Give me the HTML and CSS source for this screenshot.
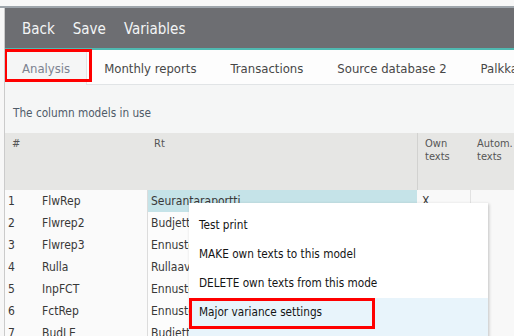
FILE: index.html
```html
<!DOCTYPE html>
<html>
<head>
<meta charset="utf-8">
<link rel="stylesheet" href="styles.css">
</head>
<body>
<div class="topline"></div>
<div class="page">
  <nav class="nav">
    <span class="nav-item">Back</span>
    <span class="nav-item">Save</span>
    <span class="nav-item">Variables</span>
  </nav>
  <div class="tabs">
    <span class="tab active">Analysis</span>
    <span class="tab">Monthly reports</span>
    <span class="tab">Transactions</span>
    <span class="tab">Source database 2</span>
    <span class="tab">Palkkalaskenta</span>
  </div>
  <div class="intro">The column models in use</div>
  <div class="grid">
    <div class="th th-num">#</div>
    <div class="th th-rt">Rt</div>
    <div class="th th-own">Own<br>texts</div>
    <div class="th th-auto">Autom.<br>texts</div>

    <div class="td">1</div><div class="td">FlwRep</div><div class="td rt sel">Seurantaraportti</div><div class="td own">X</div><div class="td auto"></div>
    <div class="td">2</div><div class="td">Flwrep2</div><div class="td rt">Budjettiraportti</div><div class="td own"></div><div class="td auto"></div>
    <div class="td">3</div><div class="td">Flwrep3</div><div class="td rt">Ennusteraportti</div><div class="td own"></div><div class="td auto"></div>
    <div class="td">4</div><div class="td">Rulla</div><div class="td rt">Rullaava ennuste</div><div class="td own"></div><div class="td auto"></div>
    <div class="td">5</div><div class="td">InpFCT</div><div class="td rt">Ennusteen syöttö</div><div class="td own"></div><div class="td auto"></div>
    <div class="td">6</div><div class="td">FctRep</div><div class="td rt">Ennusteraportti</div><div class="td own"></div><div class="td auto"></div>
    <div class="td">7</div><div class="td">BudLE</div><div class="td rt">Budjetti LE</div><div class="td own"></div><div class="td auto"></div>
  </div>

  <div class="menu">
    <div class="menu-item">Test print</div>
    <div class="menu-item">MAKE own texts to this model</div>
    <div class="menu-item">DELETE own texts from this mode</div>
    <div class="menu-item hover">Major variance settings</div>
  </div>

  <div class="mark mark-tab"></div>
  <div class="mark mark-item"></div>
</div>
</body>
</html>
```

FILE: styles.css
```css
html, body {
  margin: 0;
  padding: 0;
  height: 336px;
  overflow: hidden;
  background: #f7f7f7;
}

body {
  font-family: "DejaVu Sans Condensed", "DejaVu Sans", sans-serif;
  font-stretch: condensed;
  color: #333;
}

.topline {
  margin-top: 6px;
  height: 2px;
  background: #9ea5ab;
}

.page {
  position: relative;
  margin-left: 4px;
  border-left: 1px solid #cbcbcb;
  background: #f5f6f6;
  height: 328px;
  overflow: hidden;
}

.nav {
  display: flex;
  gap: 18px;
  height: 40px;
  box-sizing: border-box;
  padding: 2px 0 0 17px;
  align-items: center;
  background: #6d6e72;
  border-bottom: 2px solid #4fb9b1;
  height: 42px;
}

.nav-item {
  font-size: 15px;
  color: #f3f5f6;
}

.tabs {
  display: flex;
  height: 34px;
  background: #fdfdfd;
  border-bottom: 1px solid #e1e4e6;
  white-space: nowrap;
}

.tab {
  padding: 3px 17px 0;
  line-height: 31px;
  font-size: 13px;
  color: #474747;
}

.tab.active {
  background: #f5f6f6;
  color: #7c8290;
  border-right: 1px solid #e2e4e6;
  height: 32px;
  padding-right: 16px;
}

.intro {
  height: 48px;
  box-sizing: border-box;
  padding: 20px 0 0 8px;
  line-height: 16px;
  font-size: 11.7px;
  color: #4f5b68;
}

.grid {
  display: grid;
  grid-template-columns: 34px 108px 270px 54px 1fr;
  grid-template-rows: 57px;
  grid-auto-rows: 22px;
  font-size: 12px;
}

.th {
  grid-row: 1;
  box-sizing: border-box;
  padding: 4px 7px 0;
  line-height: 13px;
  font-size: 11px;
  background: #e6e6e4;
  color: #555;
  white-space: nowrap;
}

.th-num { grid-column: 1 / 3; }
.th-rt { grid-column: 3; }
.th-own { grid-column: 4; border-left: 1px solid #d2d2d0; }
.th-auto { grid-column: 5; padding-left: 6px; }

.td {
  line-height: 22px;
  padding-left: 3px;
  background: #fafafa;
  color: #383838;
  white-space: nowrap;
  overflow: hidden;
}

.td.rt {
  border-left: 1px solid #dcdcdc;
  background: #fcfcfc;
}

.td.rt.sel {
  background: #c5e3e8;
}

.td.own {
  padding-left: 5px;
  border-right: 1px solid #e2e2e2;
  background: #f9f9f9;
}

.td.auto {
  background: #f8f8f8;
}

.menu {
  position: absolute;
  left: 184px;
  top: 195px;
  width: 299px;
  height: 160px;
  padding-top: 8px;
  box-sizing: border-box;
  background: #fff;
  box-shadow: 1px 1px 3px rgba(0, 0, 0, 0.22);
}

.menu-item {
  line-height: 29px;
  padding-left: 10px;
  font-size: 11.7px;
  color: #141414;
}

.menu-item.hover {
  background: #e8f4fb;
  padding-bottom: 12px;
}

.mark {
  position: absolute;
  border: 3px solid #f00;
  box-sizing: border-box;
}

.mark-tab {
  left: -1px;
  top: 41px;
  width: 88px;
  height: 33px;
}

.mark-item {
  left: 184px;
  top: 290px;
  width: 186px;
  height: 31px;
}
```
